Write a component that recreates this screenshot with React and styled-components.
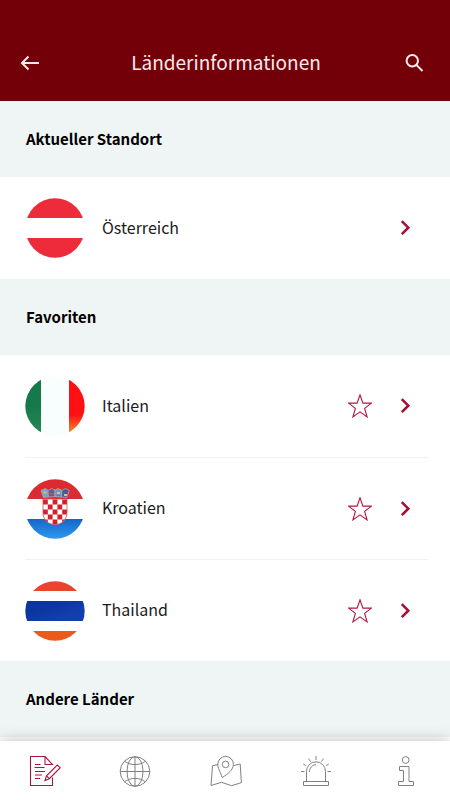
import React from 'react';
import styled, { createGlobalStyle } from 'styled-components';

const GlobalStyle = createGlobalStyle`
  * { box-sizing: border-box; }
  body {
    margin: 0;
    background: #fff;
    color: #1c1c1c;
    font-family: "Noto Sans CJK SC", "Noto Sans", sans-serif;
  }
`;

const Screen = styled.div`
  display: flex;
  flex-direction: column;
  height: 100vh;
  overflow: hidden;
`;

const Header = styled.header`
  display: flex;
  align-items: center;
  flex: none;
  padding: 43px 24px 18px 18px;
  background: #730008;
  color: #fdeaea;
`;

const Title = styled.h1`
  flex: 1;
  margin: 0;
  padding: 0 0 2px 8px;
  font-size: 19px;
  line-height: 38px;
  font-weight: 400;
  text-align: center;
`;

const IconButton = styled.button`
  display: flex;
  flex: none;
  padding: 0;
  border: 0;
  background: none;
  color: ${p => p.$color || 'inherit'};
  cursor: pointer;
`;

const Content = styled.main`
  flex: 1;
  min-height: 0;
  overflow: hidden;
`;

const SectionTitle = styled.h2`
  margin: 0;
  padding: 26px;
  background: #eff4f5;
  color: #000;
  font-size: 15px;
  line-height: 24px;
  font-weight: 700;
`;

const List = styled.ul`
  margin: 0;
  padding: 0 22px 0 25px;
  list-style: none;
`;

const Row = styled.li`
  display: flex;
  align-items: center;
  gap: 21px;
  height: 102px;
  padding-right: 11px;

  & + & {
    border-top: 1px solid #f1f1f1;
  }
`;

const CountryLink = styled.a`
  display: flex;
  align-items: center;
  flex: 1;
  gap: 17px;
  color: inherit;
  text-decoration: none;
`;

const CountryName = styled.span`
  padding-bottom: 3px;
  font-size: 16px;
  line-height: 24px;
`;

const TabBar = styled.nav`
  position: relative;
  display: flex;
  align-items: center;
  justify-content: space-between;
  flex: none;
  height: 59px;
  padding: 0 28px 0 29px;
  background: #fff;
  box-shadow: 0 0 14px rgba(0, 0, 0, 0.26);
`;

const Tab = styled.a`
  display: flex;
  color: ${p => (p.$active ? '#a3183f' : '#808080')};
`;

const svgProps = { fill: 'none', stroke: 'currentColor', 'aria-hidden': true };

const BackIcon = () => (
  <svg width="24" height="24" viewBox="0 0 24 24" strokeWidth="2" {...svgProps}>
    <path d="M21 12H4M10.500 5.500L4 12l6.500 6.500" />
  </svg>
);

const SearchIcon = () => (
  <svg width="24" height="24" viewBox="0 0 24 24" strokeWidth="2" {...svgProps}>
    <circle cx="10.300" cy="9.700" r="5.700" />
    <path d="M14.500 14l6 6" />
  </svg>
);

const StarIcon = () => (
  <svg width="24" height="24" viewBox="0 0 24 24" strokeWidth="1.100" {...svgProps}>
    <path d="M12 .8l2.900 8.300h8.500l-6.800 5.300 2.500 8.500-7.100-5-7.100 5 2.500-8.500L.6 9.100h8.500z" />
  </svg>
);

const ChevronIcon = () => (
  <svg width="24" height="24" viewBox="0 0 24 24" strokeWidth="2.600" {...svgProps}>
    <path d="M8.800 5.200l6.500 6.500-6.500 6.500" />
  </svg>
);

const NotesIcon = () => (
  <svg width="32" height="32" viewBox="0 0 32 32" strokeWidth="1.100" {...svgProps}>
    <path d="M23.500 22.500v8h-22v-29H16l7.500 8H16v-8" />
    <path d="M6 9.500h5.500M5.500 12.500h10M6 16.500h10M6 20h7M6 23.500h5" />
    <path d="M16 25.500l1.500-4.700L28.300 10l2.900 2.700-10.900 11zM17.500 20.800l2.800 2.900" />
  </svg>
);

const GlobeIcon = () => (
  <svg width="32" height="32" viewBox="0 0 32 32" strokeWidth="1" {...svgProps}>
    <circle cx="16" cy="16.500" r="14.800" />
    <ellipse cx="16" cy="16.500" rx="8" ry="14.800" />
    <path d="M16 1.700v29.600M1.200 16.500h29.600M5.500 6.200c6 4.500 15 4.500 21 0M5.500 26.800c6-4.500 15-4.500 21 0" />
  </svg>
);

const MapIcon = () => (
  <svg width="32" height="32" viewBox="0 0 32 32" strokeWidth="1" {...svgProps}>
    <path d="M8 9.500l-5.500 1.300L1 30.500l10.500-3.200 10 3.400 9.900-3L30.200 9l-6.500 1.600" />
    <path d="M12.200 22.500C10 16 7.800 13.300 7.800 9.200a7.800 7.800 0 0 1 15.600 0c0 5.700-5.700 10-11.200 13.300z" />
    <circle cx="15.600" cy="9.400" r="3.300" />
  </svg>
);

const SirenIcon = () => (
  <svg width="32" height="32" viewBox="0 0 32 32" strokeWidth="1" {...svgProps}>
    <path d="M6.500 26.500V16.300a9.500 9.500 0 0 1 19 0v10.200M3.500 26.500h25v4h-25z" />
    <path d="M9.500 17c0-4 2.300-7 6.500-7.300" />
    <path d="M1 16.500h3.500M27.500 16.500H31M3.200 9l2.700 1.700M28.800 9l-2.700 1.700M8.600 3.700l2 3M23.400 3.700l-2 3M16 1.200V5" />
  </svg>
);

const InfoIcon = () => (
  <svg width="32" height="32" viewBox="0 0 32 32" strokeWidth="1" {...svgProps}>
    <circle cx="15.700" cy="5" r="3.400" />
    <path d="M9.500 11.500h9.500v15h4.500v4h-15v-4h5v-11h-4z" />
  </svg>
);

const FlagShape = ({ id, children }) => (
  <svg width="60" height="60" viewBox="0 0 60 60" aria-hidden="true">
    <defs>
      <clipPath id={`${id}-clip`}>
        <circle cx="30" cy="30" r="29.700" />
      </clipPath>
    </defs>
    <g clipPath={`url(#${id}-clip)`}>{children}</g>
  </svg>
);

const AustriaFlag = () => (
  <FlagShape id="at">
    <path fill="#ee2b3b" d="M0 0h60v20H0zM0 40h60v20H0z" />
  </FlagShape>
);

const ItalyFlag = () => (
  <FlagShape id="it">
    <defs>
      <linearGradient id="it-green" x2="0" y2="1">
        <stop offset=".5" stopColor="#16794b" />
        <stop offset="1" stopColor="#258b55" />
      </linearGradient>
      <linearGradient id="it-red" x2="0" y2="1">
        <stop offset=".65" stopColor="#fc1012" />
        <stop offset=".9" stopColor="#f47a28" />
      </linearGradient>
    </defs>
    <path fill="#f8fefd" d="M16 0h28v60H16z" />
    <path fill="url(#it-green)" d="M0 0h16v60H0z" />
    <path fill="url(#it-red)" d="M44 0h16v60H44z" />
  </FlagShape>
);

// red fields of the chequered shield, 5 x 5
const checks = [];
for (let y = 0; y < 5; y++) {
  for (let x = 0; x < 5; x++) {
    if ((x + y) % 2 === 0) checks.push([x, y]);
  }
}

const CroatiaFlag = () => (
  <FlagShape id="hr">
    <defs>
      <linearGradient id="hr-blue" x2="0" y2="1">
        <stop offset="0" stopColor="#1665c8" />
        <stop offset="1" stopColor="#2d9af0" />
      </linearGradient>
      <clipPath id="hr-shield">
        <path d="M18 20h24v13c0 8-5 12.500-12 12.500S18 41 18 33z" />
      </clipPath>
    </defs>
    <path fill="#dc2b30" d="M0 0h60v20H0z" />
    <path fill="url(#hr-blue)" d="M0 40h60v20H0z" />
    <g clipPath="url(#hr-shield)">
      <path fill="#fff" d="M18 20h24v26H18z" />
      {checks.map(([x, y]) => (
        <rect key={`${x}-${y}`} x={18 + x * 4.800} y={20.500 + y * 5} width="4.800" height="5" fill="#d3202b" />
      ))}
    </g>
    <path fill="none" stroke="#e2474b" strokeWidth=".8" d="M18 20h24v13c0 8-5 12.500-12 12.500S18 41 18 33z" />
    <g stroke="#b9a3ae" strokeWidth=".8">
      <path fill="#6fa3cf" d="M18.500 18.500l-2.500-7 4.200-2 3.300 2v6.500z" />
      <path fill="#5a5f9c" d="M23.500 18l-.5-6.500 3.700-2 3.300 1.500v6.500z" />
      <path fill="#6f97c6" d="M30 17.500V11l3.300-1.500 3.700 2-.5 6.500z" />
      <path fill="#4c5797" d="M36.500 18l.5-6.500 3.300-2 4 2-2.500 7z" />
    </g>
    <path fill="#d9c36c" d="M18.500 12.500h3v2h-3zM32 13h3v2h-3zM39 15h3v2h-3z" />
    <path fill="#d74b55" d="M23.500 14h5.500v1.500h-5.500zM31.500 16h4v1h-4z" />
  </FlagShape>
);

const ThailandFlag = () => (
  <FlagShape id="th">
    <defs>
      <linearGradient id="th-blue" x2="1" y2="1">
        <stop offset=".35" stopColor="#0c359f" />
        <stop offset=".7" stopColor="#143eaf" />
      </linearGradient>
    </defs>
    <path fill="#e9452c" d="M0 0h60v10H0z" />
    <path fill="url(#th-blue)" d="M0 20h60v20H0z" />
    <path fill="#ec5a1a" d="M0 50h60v10H0z" />
  </FlagShape>
);

const favorites = [
  { name: 'Italien', Flag: ItalyFlag },
  { name: 'Kroatien', Flag: CroatiaFlag },
  { name: 'Thailand', Flag: ThailandFlag },
];

const tabs = [
  { label: 'Registrierung', Icon: NotesIcon, active: true },
  { label: 'Länder', Icon: GlobeIcon },
  { label: 'Karte', Icon: MapIcon },
  { label: 'Notfall', Icon: SirenIcon },
  { label: 'Info', Icon: InfoIcon },
];

function Country({ name, Flag, favorite }) {
  return (
    <Row>
      <CountryLink href="#">
        <Flag />
        <CountryName>{name}</CountryName>
      </CountryLink>
      {favorite && (
        <IconButton $color="#b3173f" aria-label={`${name} als Favorit`}>
          <StarIcon />
        </IconButton>
      )}
      <IconButton $color="#a51035" aria-label={`${name} öffnen`}>
        <ChevronIcon />
      </IconButton>
    </Row>
  );
}

export default function App() {
  return (
    <Screen>
      <GlobalStyle />
      <Header>
        <IconButton aria-label="Zurück">
          <BackIcon />
        </IconButton>
        <Title>Länderinformationen</Title>
        <IconButton aria-label="Suchen">
          <SearchIcon />
        </IconButton>
      </Header>
      <Content>
        <SectionTitle>Aktueller Standort</SectionTitle>
        <List>
          <Country name="Österreich" Flag={AustriaFlag} />
        </List>
        <SectionTitle>Favoriten</SectionTitle>
        <List>
          {favorites.map(c => (
            <Country key={c.name} {...c} favorite />
          ))}
        </List>
        <SectionTitle>Andere Länder</SectionTitle>
      </Content>
      <TabBar>
        {tabs.map(({ label, Icon, active }) => (
          <Tab key={label} href="#" aria-label={label} $active={active}>
            <Icon />
          </Tab>
        ))}
      </TabBar>
    </Screen>
  );
}
